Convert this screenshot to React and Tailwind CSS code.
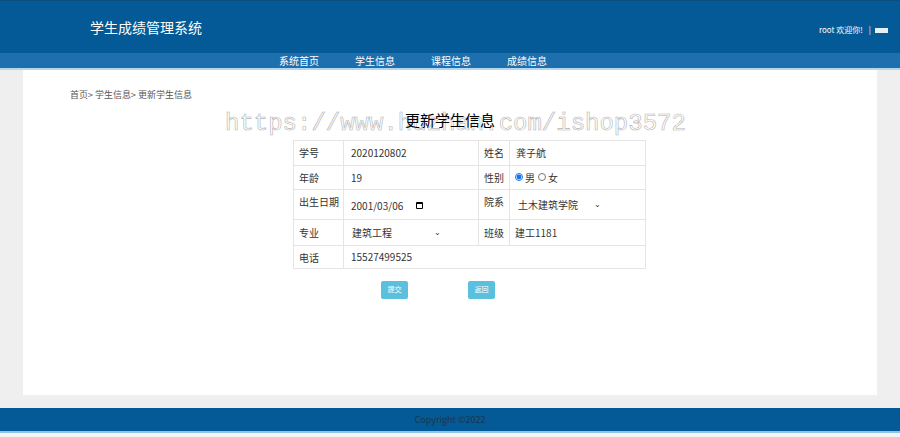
import React, { useState } from "react";

const font = { fontFamily: '"Microsoft YaHei", "Noto Sans CJK SC", "Liberation Sans", sans-serif' };

const navItems = ["系统首页", "学生信息", "课程信息", "成绩信息"];

const App = () => {
  const [sex, setSex] = useState("男");

  return (
    <div className="w-[900px] h-[437px] bg-[#f8f9fa] flex flex-col overflow-hidden" style={font}>
      {/* Header */}
      <div className="h-[53px] bg-[#045a96] flex items-center justify-between border-t border-[#0b4f80]">
        <div className="pl-[90px] text-white text-[14px] mt-[1px]">学生成绩管理系统</div>
        <div className="flex items-center pr-[12px] mt-[6px] text-white text-[8px]">
          <span>root 欢迎你!</span>
          <span className="ml-[6px] mr-[4px]">|</span>
          <span className="w-[13px] h-[5px] bg-white/90"></span>
        </div>
      </div>

      {/* Nav */}
      <div className="h-[17px] bg-[#1d6fad] flex pl-[279px] items-center border-b-2 border-[#b5d6ef]">
        {navItems.map((item, idx) => (
          <div key={idx} className="w-[76px] text-white text-[10px] leading-none">
            {item}
          </div>
        ))}
      </div>

      {/* Body */}
      <div className="flex-1 bg-[#efefef] px-[23px] pb-[13px]">
        <div className="bg-white h-full relative">
          <div className="pl-[47px] pt-[18px] text-[9px] text-[#555]">首页&gt; 学生信息&gt; 更新学生信息</div>

          {/* watermark */}
          <div
            className="absolute left-[202px] top-[42px] text-[24px] leading-none text-transparent select-none pointer-events-none"
            style={{ fontFamily: '"Liberation Mono", "Courier New", monospace', WebkitTextStroke: "0.6px #b4b4b4" }}
          >
            https://www.huzhan.com/ishop3572
          </div>

          <div className="relative text-center text-[15px] text-black mt-[8px] leading-[20px]">更新学生信息</div>

          <table className="table-fixed ml-[270px] mt-[10px] w-[352px] border-collapse text-[10px] text-[#333] whitespace-nowrap">
            <colgroup>
              <col className="w-[50px]" />
              <col className="w-[135px]" />
              <col className="w-[31px]" />
              <col className="w-[136px]" />
            </colgroup>
            <tbody>
              <tr className="h-[25px]">
                <td className="border border-[#e5e5e5] px-[5px]">学号</td>
                <td className="border border-[#e5e5e5] px-[7px]">2020120802</td>
                <td className="border border-[#e5e5e5] px-[5px]">姓名</td>
                <td className="border border-[#e5e5e5] px-[6px]">龚子航</td>
              </tr>
              <tr className="h-[24px]">
                <td className="border border-[#e5e5e5] px-[5px]">年龄</td>
                <td className="border border-[#e5e5e5] px-[7px]">19</td>
                <td className="border border-[#e5e5e5] px-[5px]">性别</td>
                <td className="border border-[#e5e5e5] px-[5px]">
                  <label className="inline-flex items-center gap-[2px]">
                    <input
                      type="radio"
                      name="sex"
                      checked={sex === "男"}
                      onChange={() => setSex("男")}
                      className="w-[8px] h-[8px] m-0 accent-[#1a73e8]"
                    />
                    男
                  </label>
                  <label className="inline-flex items-center gap-[2px] ml-[3px]">
                    <input
                      type="radio"
                      name="sex"
                      checked={sex === "女"}
                      onChange={() => setSex("女")}
                      className="w-[8px] h-[8px] m-0"
                    />
                    女
                  </label>
                </td>
              </tr>
              <tr className="h-[30px]">
                <td className="border border-[#e5e5e5] px-[5px] align-top pt-[4px]">出生日期</td>
                <td className="border border-[#e5e5e5] px-[7px]">
                  <span className="inline-flex items-center gap-[13px] mt-[2px]">
                    2001/03/06
                    <span className="w-[7px] h-[7px] border border-black border-t-2 rounded-[1px]"></span>
                  </span>
                </td>
                <td className="border border-[#e5e5e5] px-[5px] align-top pt-[4px]">院系</td>
                <td className="border border-[#e5e5e5] px-[8px]">
                  <span className="inline-flex items-center gap-[16px]">
                    土木建筑学院
                    <span className="text-[8px]">⌄</span>
                  </span>
                </td>
              </tr>
              <tr className="h-[26px]">
                <td className="border border-[#e5e5e5] px-[5px]">专业</td>
                <td className="border border-[#e5e5e5] px-[8px]">
                  <span className="inline-flex items-center gap-[42px]">
                    建筑工程
                    <span className="text-[8px]">⌄</span>
                  </span>
                </td>
                <td className="border border-[#e5e5e5] px-[5px]">班级</td>
                <td className="border border-[#e5e5e5] px-[5px]">建工1181</td>
              </tr>
              <tr className="h-[23px]">
                <td className="border border-[#e5e5e5] px-[5px] align-top pt-[4px]">电话</td>
                <td className="border border-[#e5e5e5] px-[7px]" colSpan={3}>15527499525</td>
              </tr>
            </tbody>
          </table>

          <div className="flex justify-center gap-[60px] mt-[12px] -ml-[24px]">
            <button className="w-[27px] h-[18px] bg-[#5bc0de] text-white text-[7px] rounded-[2px]">提交</button>
            <button className="w-[27px] h-[18px] bg-[#5bc0de] text-white text-[7px] rounded-[2px]">返回</button>
          </div>
        </div>
      </div>

      {/* Footer */}
      <div className="h-[25px] bg-[#045a96] flex items-center justify-center border-b-2 border-[#8cc4ea]">
        <span className="text-[9px] text-[#1c3550]">Copyright ©2022</span>
      </div>
      <div className="h-[4px] bg-[#f5f5f5]"></div>
    </div>
  );
};

export default App;
